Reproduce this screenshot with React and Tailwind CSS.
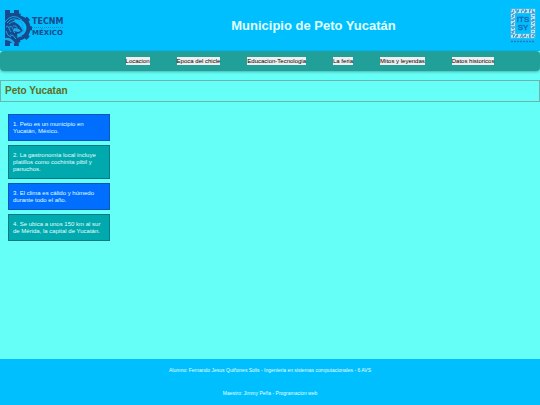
const links = [
  'Locacion',
  'Epoca del chicle',
  'Educacion-Tecnologia',
  'La feria',
  'Mitos y leyendas',
  'Datos historicos',
];

const facts = [
  'Peto es un municipio en Yucatán, México.',
  'La gastronomía local incluye platillos como cochinita pibil y panuchos.',
  'El clima es cálido y húmedo durante todo el año.',
  'Se ubica a unos 150 km al sur de Mérida, la capital de Yucatán.',
];

function TecnmLogo() {
  return (
    <div className="flex w-[112px] items-center pt-1 text-[#174a8c]">
      <svg viewBox="0 0 27 38" className="h-[38px] w-[27px]" aria-hidden="true">
        <g fill="none" stroke="currentColor">
          <circle cx="13" cy="19" r="10.500" strokeWidth="4" />
          <circle cx="13" cy="19" r="13" strokeWidth="3" strokeDasharray="4.600 5.610" strokeDashoffset="2.300" />
        </g>
        <path fill="currentColor" d="M0 1h5v3h4V1h5v7L8 12l6 4 4 5-2 3-4 1 1 4 1 8H9v-3H5v3H0z" />
        <g fill="none" stroke="#16a4e6" strokeWidth="1">
          <path d="M0 13Q7 3 17 11M2 14Q8 6 15 13M4 15Q9 10 14 15M1 18Q3 16 4 19T6 23M4 18Q7 16 8 20T10 24M8 17Q12 16 12 20M1 22Q2 27 6 28M5 26Q8 25 11 30" />
          <path strokeWidth="1.500" d="M15 12Q19 15 17 19L19 22L16 24V27L12 28" />
        </g>
        <path fill="#1ba9ea" d="M9 19l5 1 2 2-3 1-4-1zM0 29q6-1 10 5l-2 1q-3-4-8-4z" />
      </svg>
      <div className="flex flex-col font-['DejaVu_Sans'] leading-[11px] font-bold">
        <span className="text-[8px]">TECNM</span>
        <span aria-hidden="true" className="border-t border-dotted border-[#2f7fbd]" />
        <span className="text-[7px]">MÉXICO</span>
      </div>
    </div>
  );
}

function ItssyLogo() {
  return (
    <svg viewBox="0 0 26 36" className="h-9 w-[26px]" role="img" aria-label="ITSSY">
      <rect x="3" y="3" width="20" height="25" fill="none" stroke="#5fb4de" strokeWidth="5" />
      <g fill="none" stroke="#b9e3f2">
        <rect x="2" y="2" width="22" height="27" strokeWidth="2" strokeDasharray="3 2 1 1" />
        <rect x="4" y="4" width="18" height="23" strokeWidth="2" strokeDasharray="2 2 3 1" />
      </g>
      <rect x="3" y="3" width="20" height="25" fill="none" stroke="#3d8fbd" strokeWidth="1.500" strokeDasharray="1 3 2 2" />
      <g fill="#1763ae" fontFamily="Liberation Sans, sans-serif" fontSize="8" textAnchor="middle" stroke="#1763ae" strokeWidth="0.300">
        <text x="13" y="14">ITS</text>
        <text x="13" y="22">SY</text>
      </g>
      <path stroke="#2878b8" strokeWidth="1.500" strokeDasharray="2 1" d="M1 33.500H25" />
    </svg>
  );
}

export default function App() {
  return (
    <div className="flex min-h-screen flex-col bg-[#66fff7] font-['Liberation_Sans',Arial,sans-serif]">
      <header className="flex h-[51px] items-center bg-[#00bfff] pr-1 pl-[5px]">
        <TecnmLogo />
        <h1 className="flex-1 text-center text-[13px] leading-4 font-bold text-[#e0ffff]">Municipio de Peto Yucatán</h1>
        <ItssyLogo />
      </header>
      <nav className="flex h-5 items-center justify-center gap-[27px] rounded bg-[#20a098] pl-20 shadow-[0_1px_3px_rgba(0,0,0,0.3)]">
        {links.map((label) => (
          <button key={label} type="button" className="bg-[#efefef] py-px text-[6px] leading-[6px] whitespace-nowrap text-black">
            {label}
          </button>
        ))}
      </nav>
      <main className="flex-1">
        <h2 className="mt-[9px] border border-[#6cb5ae] px-1 py-[2px] text-[10px] leading-4 font-bold text-[#5f6b22]">
          Peto Yucatan
        </h2>
        <ol className="mt-3 ml-2 flex w-[102px] flex-col gap-1">
          {facts.map((fact, i) => (
            <li
              key={fact}
              className="border border-[#087982] bg-[#00a9ad] px-1 pt-[6px] pb-[5px] text-[6px] leading-[7px] text-[#e0ffff] odd:border-[#0757b5] odd:bg-[#006eff]"
            >
              {`${i + 1}. ${fact}`}
            </li>
          ))}
        </ol>
      </main>
      <footer className="flex flex-col items-center gap-4 bg-[#00bfff] py-2 text-[5px] leading-[7px] text-[#e0ffff]">
        <p>Alumno: Fernando Jesus Quiñones Solis - Ingenieria en sistemas computacionales - 6 AVS</p>
        <p>Maestro: Jimmy Peña - Programacion web</p>
      </footer>
    </div>
  );
}
